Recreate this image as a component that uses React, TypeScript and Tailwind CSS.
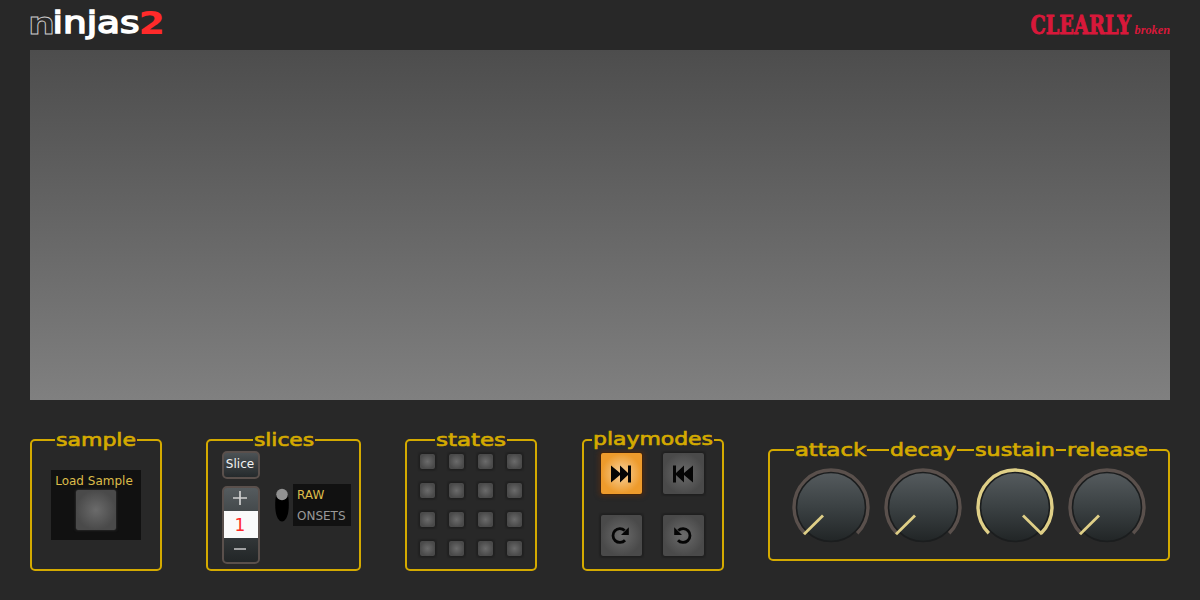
import type { ReactNode } from "react";

function Lettering({ text, width }: { text: string; width: number }) {
  return (
    <svg width={width} height="26" className="block overflow-visible" role="img" aria-label={text}>
      <text
        x="0"
        y="16"
        textLength={width}
        lengthAdjust="spacingAndGlyphs"
        fontFamily="'DejaVu Sans', sans-serif"
        fontWeight="400"
        fontSize="18.5"
        fill="#d4aa00"
        stroke="#d4aa00"
        strokeWidth="0.7"
      >
        {text}
      </text>
    </svg>
  );
}

function Title({ text, width, className }: { text: string; width: number; className: string }) {
  return (
    <div className={`absolute h-[20px] bg-[#282828] px-[1px] ${className}`}>
      <Lettering text={text} width={width} />
    </div>
  );
}

function Panel({ className, children }: { className: string; children: ReactNode }) {
  return (
    <section className={`relative shrink-0 rounded-[5px] border-2 border-[#d4aa00] ${className}`}>
      {children}
    </section>
  );
}

function Pad({ className, children }: { className: string; children?: ReactNode }) {
  return (
    <button
      className={`flex items-center justify-center border border-[#1f1f1f] bg-[radial-gradient(circle,#6b6b6b_0%,#4a4a4a_70%)] shadow-[0_0_1px_1px_rgba(28,28,28,0.5)] ${className}`}
    >
      {children}
    </button>
  );
}

function Knob({ full = false }: { full?: boolean }) {
  const ring = full ? "#dfcf87" : "#5a504c";
  return (
    <svg width="78" height="78" viewBox="-39 -39 78 78" className="block shrink-0">
      <defs>
        <linearGradient id="knob-face" x1="0" y1="0" x2="0" y2="1">
          <stop offset="0" stopColor="#555b5e" />
          <stop offset="0.5" stopColor="#3b4143" />
          <stop offset="1" stopColor="#212526" />
        </linearGradient>
      </defs>
      <circle r="34.5" fill="url(#knob-face)" stroke="#1b1d1e" strokeWidth="1.6" />
      <path d="M-26.2 26.2A37 37 0 1 1 26.2 26.2" fill="none" stroke={ring} strokeWidth="3.4" />
      <path d={full ? "M8 8.5L27 27.2" : "M-8 8.5L-27 27.2"} stroke="#dfcf87" strokeWidth="2.8" />
    </svg>
  );
}

function Forward() {
  return (
    <svg width="20" height="18" viewBox="0 0 20 18" fill="#050505">
      <path d="M0 .5L9 8V.5L17 8V.5H20V17.5H17V10L9 17.5V10L0 17.5Z" />
    </svg>
  );
}

function Turn() {
  return (
    <svg width="20" height="20" viewBox="0 0 20 20">
      <path d="M14 14.2A6.9 6.9 0 1 1 13.7 4.6" fill="none" stroke="#050505" strokeWidth="2.8" />
      <path d="M17.8 1.2V9H10Z" fill="#050505" />
    </svg>
  );
}

export default function App() {
  return (
    <main className="flex h-[600px] w-[1200px] flex-col overflow-hidden bg-[#282828] px-[30px] font-['DejaVu_Sans',sans-serif]">
      <header className="flex h-[50px] shrink-0 items-start justify-between">
        <svg width="134" height="44" className="overflow-visible" aria-label="ninjas2">
          <g fontFamily="'DejaVu Sans', sans-serif">
            <text x="-2" y="33.5" fontSize="31" fontWeight="700" textLength="27" lengthAdjust="spacingAndGlyphs" fill="#282828" stroke="#cccccc" strokeWidth="0.8">n</text>
            <text x="22.5" y="33" fontSize="29.5" textLength="87" lengthAdjust="spacingAndGlyphs" fill="#ffffff" stroke="#ffffff" strokeWidth="1.5">injas</text>
            <text x="108.5" y="33.5" fontSize="32" fontWeight="700" textLength="26.5" lengthAdjust="spacingAndGlyphs" fill="#ff2a2a">2</text>
          </g>
        </svg>
        <div className="flex items-start">
          <svg width="103" height="44" className="overflow-visible" aria-label="CLEARLY">
            <text transform="translate(0.5 34.3) scale(0.77 1)" fontSize="26" textLength="130.5" lengthAdjust="spacingAndGlyphs" fontFamily="'DejaVu Serif', serif" fontWeight="700" fill="#d8183a" stroke="#d8183a" strokeWidth="0.9">CLEARLY</text>
          </svg>
          <svg width="37" height="44" className="overflow-visible" aria-label="broken">
            <text x="1.5" y="34.3" fontSize="12" textLength="35.5" lengthAdjust="spacingAndGlyphs" fontFamily="'Liberation Serif', serif" fontWeight="700" fontStyle="italic" fill="#d8183a">broken</text>
          </svg>
        </div>
      </header>

      <div className="h-[350px] shrink-0 bg-linear-to-b from-[#4d4d4d] to-[#808080]" />

      <div className="flex items-start pt-[39px]">
        <Panel className="mr-[44px] flex h-[132px] w-[132px] items-start justify-center pt-[29px]">
          <Title text="sample" width={80} className="-top-[11px] left-[23px]" />
          <div className="flex h-[70px] w-[90px] flex-col items-center bg-[#111111] pt-[4px]">
            <span className="mr-[4px] whitespace-nowrap text-[12px] leading-[14px] text-[#dcbc4a]">Load Sample</span>
            <Pad className="mt-[1px] h-[42px] w-[42px] rounded-[3px]" />
          </div>
        </Panel>

        <Panel className="mr-[44px] flex h-[132px] w-[155px] items-start pl-[14px] pt-[10px]">
          <Title text="slices" width={60} className="-top-[11px] left-[45px]" />
          <div className="flex w-[38px] flex-col gap-[7px]">
            <button className="h-[28px] rounded-[5px] border-2 border-[#5a504c] bg-linear-to-b from-[#4c5255] to-[#252a2c] pb-[2px] pr-[2px] text-[12px] leading-[22px] text-[#f2f2f2]">
              Slice
            </button>
            <div className="flex h-[78px] flex-col overflow-hidden rounded-[5px] border-2 border-[#5a504c] bg-linear-to-b from-[#555b5e] to-[#222627]">
              <button className="flex h-[23px] items-start justify-center pr-[2px] pt-[3px]">
                <svg width="14" height="14" viewBox="0 0 14 14" stroke="#d0d0d0" strokeWidth="1.7"><path d="M7 0V14M0 7H14" /></svg>
              </button>
              <span className="h-[27px] bg-[#fafafa] pr-[2px] text-center text-[17px] leading-[28px] text-[#ff2a2a]">1</span>
              <button className="flex h-[21px] items-center justify-center pr-[2px]">
                <svg width="12" height="2"><path d="M0 1H12" stroke="#c8c8c8" strokeWidth="1.7" /></svg>
              </button>
            </div>
          </div>
          <svg width="14" height="34" viewBox="0 0 14 34" className="ml-[15px] mt-[37px] shrink-0 overflow-visible">
            <path d="M.2 15C.2-3 13.8-3 13.8 15V17C13.8 39 .2 39 .2 17Z" fill="#000" />
            <circle cx="7" cy="6.5" r="5.8" fill="#919191" />
          </svg>
          <div className="ml-[4px] mt-[33px] flex h-[42px] w-[58px] flex-col bg-[#111111] pl-[4px] pt-[1px] text-[12px] leading-[21px]">
            <span className="text-[#dcbc4a]">RAW</span>
            <span className="text-[#999999]">ONSETS</span>
          </div>
        </Panel>

        <Panel className="mr-[45px] h-[132px] w-[132px] pl-[12px] pt-[12px]">
          <Title text="states" width={70} className="-top-[11px] left-[28px]" />
          <div className="grid w-[104px] grid-cols-4 gap-x-[12px] gap-y-[12px]">
            {Array.from({ length: 16 }, (_, i) => (
              <Pad key={i} className="h-[17px] w-[17px] rounded-[3px]" />
            ))}
          </div>
        </Panel>

        <Panel className="mr-[44px] h-[132px] w-[142px] pl-[16px] pt-[11px]">
          <Title text="playmodes" width={120} className="-top-[12px] left-[8px]" />
          <div className="grid w-[105px] grid-cols-2 gap-[19px]">
            <button className="flex h-[43px] w-[43px] items-center justify-center rounded-[3px] border border-[#43240c] bg-[radial-gradient(circle,#f7d29e_0%,#ee9b2c_68%)] pr-[1px] shadow-[0_0_4px_2px_rgba(90,45,18,0.5)]">
              <Forward />
            </button>
            <Pad className="h-[43px] w-[43px] rounded-[3px] pr-[1px]"><span className="-scale-x-100"><Forward /></span></Pad>
            <Pad className="h-[43px] w-[43px] rounded-[3px] pr-[1px]"><Turn /></Pad>
            <Pad className="h-[43px] w-[43px] rounded-[3px] pr-[3px]"><span className="-scale-x-100"><Turn /></span></Pad>
          </div>
        </Panel>

        <Panel className="mt-[10px] flex h-[112px] w-[402px] items-start gap-[14px] pl-[22px] pt-[17px]">
          <Title text="attack" width={71} className="-top-[11px] left-[24px]" />
          <Title text="decay" width={66} className="-top-[11px] left-[119px]" />
          <Title text="sustain" width={80} className="-top-[11px] left-[204px]" />
          <Title text="release" width={81} className="-top-[11px] left-[296px]" />
          <Knob />
          <Knob />
          <Knob full />
          <Knob />
        </Panel>
      </div>
    </main>
  );
}
